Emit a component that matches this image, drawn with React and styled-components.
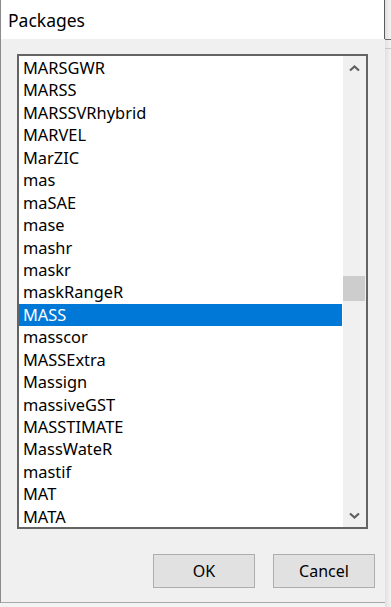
import React from 'react'
import styled, {createGlobalStyle} from 'styled-components'

const packages = [
  'MARSGWR', 'MARSS', 'MARSSVRhybrid', 'MARVEL', 'MarZIC', 'mas', 'maSAE',
  'mase', 'mashr', 'maskr', 'maskRangeR', 'MASS', 'masscor', 'MASSExtra',
  'Massign', 'massiveGST', 'MASSTIMATE', 'MassWateR', 'mastif', 'MAT', 'MATA'
]

const GlobalStyle = createGlobalStyle`
  html, body {
    margin: 0;
    padding: 0;
    background: #f3f3f3;
  }
  body {
    font-family: "Noto Sans", "Open Sans", sans-serif;
  }
`

const Screen = styled.div`
  display: flex;
  width: 391px;
  height: 607px;
  overflow: hidden;
`

const Dialog = styled.div`
  width: 384px;
  height: 602px;
  display: flex;
  flex-direction: column;
  border-left: 1px solid #8c8c8c;
  border-bottom: 1px solid #a8a8a8;
  background: #f0f0f0;
`

const TitleBar = styled.div`
  height: 39px;
  flex-shrink: 0;
  background: #fff;
  display: flex;
  align-items: center;
  padding-left: 7px;
  border-right: 1px solid #5a5a5a;
  font-size: 17.5px;
  color: #000;
`

const Body = styled.div`
  padding: 15px 17px 0 16px;
`

const ListBox = styled.div`
  height: 471px;
  display: flex;
  border: 2px solid #646464;
  background: #fff;
`

const Items = styled.ul`
  flex: 1;
  list-style: none;
  margin: 0;
  padding: 1px 0 0 0;
  overflow: hidden;
`

const Item = styled.li`
  height: 22.45px;
  line-height: 22.45px;
  padding-left: 4px;
  font-size: 16.4px;
  color: ${props => (props.selected ? '#fff' : '#000')};
  background: ${props => (props.selected ? '#0078d7' : 'transparent')};
  margin-right: 1px;
  white-space: nowrap;
`

const ScrollBar = styled.div`
  width: 23px;
  background: #f0f0f0;
  display: flex;
  flex-direction: column;
`

const Arrow = styled.div`
  height: 24px;
  display: flex;
  align-items: center;
  justify-content: center;
  color: #606060;
`

const Track = styled.div`
  flex: 1;
  position: relative;
`

const Thumb = styled.div`
  position: absolute;
  left: 0;
  right: 1px;
  height: 25px;
  background: #cdcdcd;
`

const ButtonRow = styled.div`
  display: flex;
  justify-content: flex-end;
  gap: 18px;
  padding: 25px 10px 0 0;
`

const Button = styled.button`
  width: 102px;
  height: 34px;
  background: #e1e1e1;
  border: 1px solid #adadad;
  font-family: "Noto Sans", "Open Sans", sans-serif;
  font-size: 16px;
  color: #000;
  padding: 0;
`

const Side = styled.div`
  flex: 1;
  display: flex;
  flex-direction: column;
  background: linear-gradient(to right, #e0e0e0, #f4f4f4);
`

const SideTop = styled.div`
  height: 39px;
  border-bottom: 1px solid #6a6a6a;
`

const SideBand = styled.div`
  height: 8px;
  border-bottom: 1px solid #c8c8c8;
`

const Chevron = ({down}) => (
  <svg width="11" height="7" viewBox="0 0 11 7">
    <path
      d={down ? 'M1 1.5 L5.5 5.5 L10 1.5' : 'M1 5.5 L5.5 1.5 L10 5.5'}
      fill="none"
      stroke="currentColor"
      strokeWidth="2.2"
    />
  </svg>
)

const App = () => (
  <>
    <GlobalStyle />
    <Screen>
      <Dialog>
        <TitleBar>Packages</TitleBar>
        <Body>
          <ListBox>
            <Items>
              {packages.map(name => (
                <Item key={name} selected={name === 'MASS'}>{name}</Item>
              ))}
            </Items>
            <ScrollBar>
              <Arrow><Chevron /></Arrow>
              <Track>
                <Thumb style={{top: 196}} />
              </Track>
              <Arrow><Chevron down /></Arrow>
            </ScrollBar>
          </ListBox>
        </Body>
        <ButtonRow>
          <Button>OK</Button>
          <Button>Cancel</Button>
        </ButtonRow>
      </Dialog>
      <Side>
        <SideTop />
        <SideBand />
      </Side>
    </Screen>
  </>
)

export default App
